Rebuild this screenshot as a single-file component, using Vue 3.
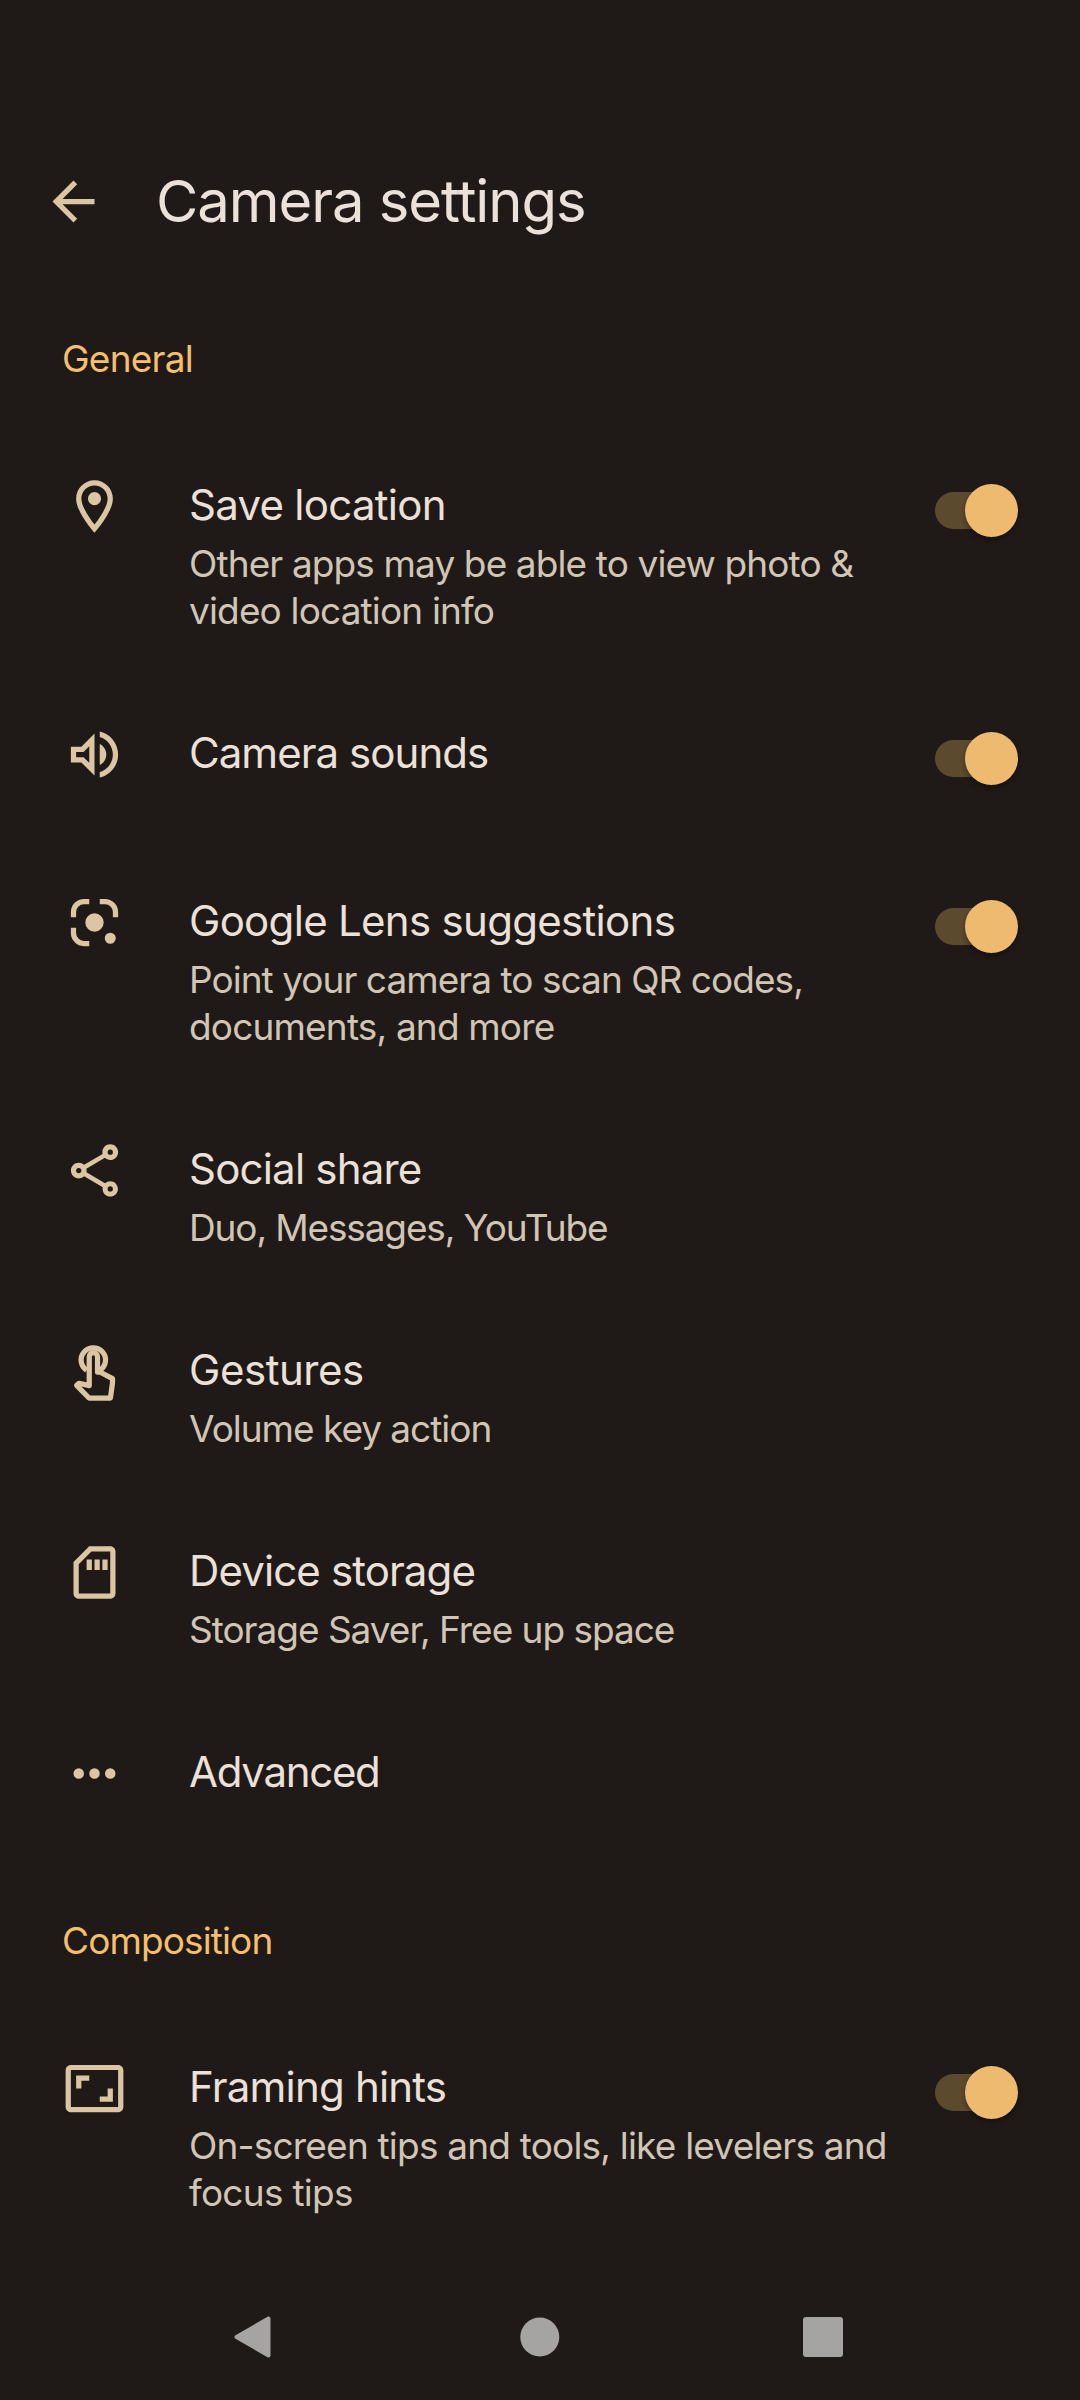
<script setup>
import { ref } from 'vue'

const icons = {
  pin: 'M12 2C8.13 2 5 5.13 5 9c0 5.25 7 13 7 13s7-7.75 7-13c0-3.87-3.13-7-7-7zM7 9c0-2.76 2.24-5 5-5s5 2.24 5 5c0 2.88-2.88 7.19-5 9.88C9.92 16.21 7 11.85 7 9zM12 6.5a2.5 2.5 0 1 0 0 5 2.5 2.5 0 1 0 0-5z',
  sound:
    'M3 9v6h4l5 5V4L7 9H3zm7-.17v6.34L7.83 13H5v-2h2.83L10 8.83zM16.5 12c0-1.77-1.02-3.29-2.5-4.03v8.05c1.48-.73 2.5-2.25 2.5-4.02zM14 3.23v2.06c2.89.86 5 3.54 5 6.71s-2.11 5.85-5 6.71v2.06c4.01-.91 7-4.49 7-8.77 0-4.28-2.99-7.86-7-8.77z',
  lens: 'M3 10V8a5 5 0 0 1 5-5h2v2H8a3 3 0 0 0-3 3v2zM14 3h2a5 5 0 0 1 5 5v2h-2V8a3 3 0 0 0-3-3h-2zM3 14v2a5 5 0 0 0 5 5h2v-2H8a3 3 0 0 1-3-3v-2zM12 8.5a3.5 3.5 0 1 0 0 7 3.5 3.5 0 1 0 0-7zM18 15.9a2.1 2.1 0 1 0 0 4.2 2.1 2.1 0 1 0 0-4.2z',
  share:
    'M18 16.08c-.76 0-1.44.3-1.96.77L8.91 12.7c.05-.23.09-.46.09-.7s-.04-.47-.09-.7l7.05-4.11c.54.5 1.25.81 2.04.81 1.66 0 3-1.34 3-3s-1.34-3-3-3-3 1.34-3 3c0 .24.04.47.09.7L8.04 9.81C7.5 9.31 6.79 9 6 9c-1.66 0-3 1.34-3 3s1.34 3 3 3c.79 0 1.5-.31 2.04-.81l7.12 4.16c-.05.21-.08.43-.08.65 0 1.61 1.31 2.92 2.92 2.92s2.92-1.31 2.92-2.92-1.31-2.92-2.92-2.92zM18 4a1 1 0 1 1 0 2 1 1 0 1 1 0-2zM6 11a1 1 0 1 1 0 2 1 1 0 1 1 0-2zM18 18.02a1 1 0 1 1 0 2 1 1 0 1 1 0-2z',
  card: 'M18 2h-8L4 8v12c0 1.1.9 2 2 2h12c1.1 0 2-.9 2-2V4c0-1.1-.9-2-2-2zm0 18H6V8.83L10.83 4H18v16zM9 7h2v4H9zM12 7h2v4h-2zM15 7h2v4h-2z',
  dots: 'M6 10a2 2 0 1 0 0 4 2 2 0 1 0 0-4zM12 10a2 2 0 1 0 0 4 2 2 0 1 0 0-4zM18 10a2 2 0 1 0 0 4 2 2 0 1 0 0-4z',
  frame:
    'M19 12h-2v3h-3v2h5v-5zM7 9h3V7H5v5h2V9zM21 3H3c-1.1 0-2 .9-2 2v14c0 1.1.9 2 2 2h18c1.1 0 2-.9 2-2V5c0-1.1-.9-2-2-2zm0 16.01H3V4.99h18v14.02z',
}

const strokes = {
  touch: [
    'M9 11.5A4.65 4.65 0 1 1 14.1 11.5',
    'M10 17.4V6.4a1.58 1.58 0 0 1 3.16 0v5.8h.9l4.8 2.5v1.6l-.8 5.8H9.9L5.2 17.3l.9-.8z',
  ],
}

// Each text line carries its own tracking in pixels
const sections = ref([
  {
    title: 'General',
    track: -0.77,
    items: [
      { icon: 'pin', title: 'Save location', track: -0.73, on: true, lines: [['Other apps may be able to view photo &', -0.88], ['video location info', -0.84]] },
      { icon: 'sound', title: 'Camera sounds', track: -0.95, on: true, lines: [] },
      { icon: 'lens', title: 'Google Lens suggestions', track: -0.7, on: true, lines: [['Point your camera to scan QR codes,', -0.96], ['documents, and more', -0.83]] },
      { icon: 'share', title: 'Social share', track: -0.8, lines: [['Duo, Messages, YouTube', -1.13]] },
      { icon: 'touch', title: 'Gestures', track: -0.45, lines: [['Volume key action', -1.02]] },
      { icon: 'card', title: 'Device storage', track: -0.88, lines: [['Storage Saver, Free up space', -1.02]] },
      { icon: 'dots', title: 'Advanced', track: -1.3, lines: [] },
    ],
  },
  {
    title: 'Composition',
    track: -0.88,
    items: [
      { icon: 'frame', title: 'Framing hints', track: -0.8, on: true, lines: [['On-screen tips and tools, like levelers and', -0.8], ['focus tips', -0.72]] },
    ],
  },
])
</script>

<template>
  <div class="screen">
    <header class="bar">
      <svg class="icon" viewBox="0 0 24 24"><path d="M20 11H7.83l5.59-5.59L12 4l-8 8 8 8 1.41-1.41L7.83 13H20v-2z" /></svg>
      <h1>Camera settings</h1>
    </header>

    <main class="list">
      <section v-for="s in sections" :key="s.title">
        <h2 :style="{ letterSpacing: s.track + 'px' }">{{ s.title }}</h2>
        <div v-for="item in s.items" :key="item.title" class="row">
          <svg class="icon" viewBox="0 0 24 24">
            <template v-if="strokes[item.icon]">
              <path v-for="d in strokes[item.icon]" :key="d" class="line" :d="d" />
            </template>
            <path v-else fill-rule="evenodd" :d="icons[item.icon]" />
          </svg>
          <div class="text">
            <div class="title" :style="{ letterSpacing: item.track + 'px' }">{{ item.title }}</div>
            <div v-if="item.lines.length" class="summary">
              <div v-for="[line, track] in item.lines" :key="line" :style="{ letterSpacing: track + 'px' }">{{ line }}</div>
            </div>
          </div>
          <button v-if="'on' in item" class="switch" :class="{ off: !item.on }" role="switch" :aria-checked="item.on" @click="item.on = !item.on">
            <span class="knob"></span>
          </button>
        </div>
      </section>
    </main>

    <nav class="nav">
      <svg viewBox="0 0 44 44"><path d="M4.5 22 L36.5 3.5 V40.5 Z" stroke-width="4" stroke-linejoin="round" class="tri" /></svg>
      <svg viewBox="0 0 44 44"><circle cx="22.8" cy="22" r="19.5" /></svg>
      <svg viewBox="0 0 44 44"><rect x="2" y="2" width="40" height="40" rx="3" /></svg>
    </nav>
  </div>
</template>

<style>
body {
  background: #1f1a17;
}
</style>

<style scoped>
.screen {
  display: flex;
  flex-direction: column;
  width: 1080px;
  height: 2400px;
  box-sizing: border-box;
  overflow: hidden;
  background: #1f1a17;
  font-family: Inter, Roboto, sans-serif;
  color: #ebe1d9;
}
.bar {
  display: flex;
  align-items: flex-start;
  box-sizing: border-box;
  height: 274px;
  padding: 129px 42px 0;
}
.bar .icon {
  margin-top: 41px;
}
h1 {
  margin: 36px 0 0 51px;
  font-size: 58px;
  line-height: 72px;
  font-weight: 400;
  letter-spacing: -1.08px;
  white-space: nowrap;
}
.list {
  flex: 1;
}
h2 {
  box-sizing: border-box;
  height: 147px;
  margin: 0;
  padding: 61px 62px 0;
  font-size: 37px;
  line-height: 47px;
  font-weight: 400;
  color: #f5bf6e;
}
.row {
  display: flex;
  align-items: flex-start;
  box-sizing: border-box;
  min-height: 168px;
  padding: 54px 62px 35px 63px;
}
.icon {
  flex: none;
  width: 63px;
  height: 63px;
  fill: #dbc5a2;
}
.line {
  fill: none;
  stroke: #dbc5a2;
  stroke-width: 2;
  stroke-linejoin: round;
}
.text {
  flex: 1;
  margin: 3px 0 0 63px;
  white-space: nowrap;
}
.title {
  font-size: 42px;
  line-height: 54px;
}
.summary {
  margin-top: 8px;
  font-size: 37px;
  line-height: 47px;
  color: #d1c5b6;
}
.switch {
  display: flex;
  align-items: center;
  justify-content: flex-end;
  flex: none;
  width: 73px;
  height: 37px;
  margin: 17px 10px 0 0;
  padding: 0;
  border: 0;
  border-radius: 19px;
  background: #5c4a2e;
}
.knob {
  flex: none;
  width: 53px;
  height: 53px;
  margin-right: -10px;
  border-radius: 50%;
  background: #edba70;
  box-shadow: 0 3px 5px rgba(0, 0, 0, 0.35);
}
.switch.off {
  justify-content: flex-start;
}
.nav {
  display: flex;
  align-items: center;
  justify-content: space-between;
  box-sizing: border-box;
  height: 126px;
  padding: 0 235px 0 232px;
}
.nav svg {
  width: 44px;
  height: 44px;
  fill: #a5a4a2;
}
.tri {
  stroke: #a5a4a2;
}
</style>
